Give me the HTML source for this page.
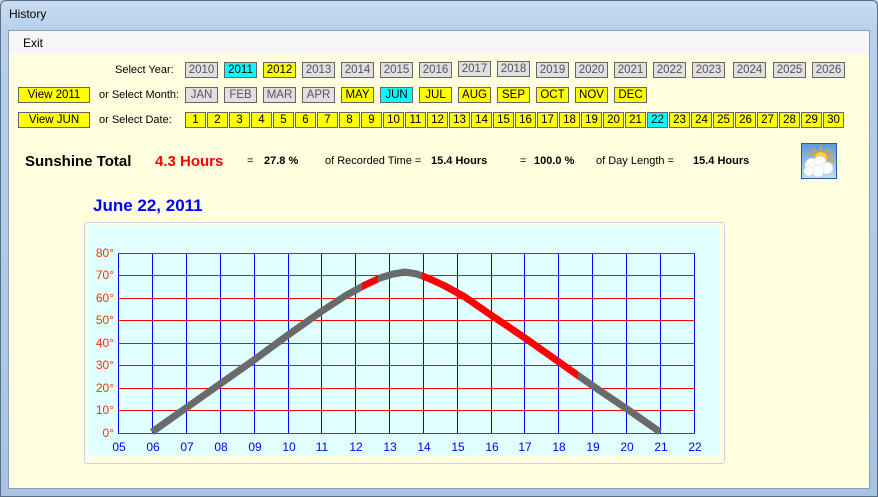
<!DOCTYPE html>
<html><head><meta charset="utf-8"><style>
*{margin:0;padding:0;box-sizing:border-box}
body{width:878px;height:497px;overflow:hidden;position:relative;font-family:"Liberation Sans",sans-serif;background:#b9d1ea}
.frame{position:absolute;left:0;top:0;width:878px;height:497px;background:linear-gradient(180deg,#c9ddf2 0,#b8d0ea 30px,#a9c4e0 100%);border:1px solid #5a6f87;border-radius:6px 6px 0 0}
.title{position:absolute;left:9px;top:7px;font-size:12px;color:#000}
.menu{position:absolute;left:8px;top:30px;width:862px;height:24px;background:#f6f6f6;border:1px solid #8aa0b8;border-bottom:none}
.menu span{position:absolute;left:14px;top:5px;font-size:12px}
.content{position:absolute;left:8px;top:54px;width:862px;height:435px;background:#ffffe0;border-left:1px solid #8aa0b8;border-right:1px solid #8aa0b8;border-bottom:1px solid #8aa0b8}
.b{position:absolute;height:16px;border:1px solid #666;font-size:11.5px;text-align:center;line-height:14px;color:#333}
.g{background:#e0e0e0;color:#555}
.y{background:#ffff00;color:#000}
.c{background:#00ffff;color:#000}
.l{position:absolute;font-size:11px;color:#000}
.t{position:absolute;font-size:11px;top:155px}
.bd{font-weight:bold}
</style></head><body>
<div class="frame"></div>
<div class="title">History</div>
<div class="menu"><span>Exit</span></div>
<div class="content"></div>

<div class="l" style="left:115px;top:64px">Select Year:</div>
<div class="l" style="left:99px;top:89px">or Select Month:</div>
<div class="l" style="left:99px;top:114px">or Select Date:</div>
<div class="b y" style="left:18px;top:87px;width:72px">View 2011</div>
<div class="b y" style="left:18px;top:112px;width:72px">View JUN</div>

<div class="b g" style="left:185px;top:62px;width:33px">2010</div>
<div class="b c" style="left:224px;top:62px;width:33px">2011</div>
<div class="b y" style="left:263px;top:62px;width:33px">2012</div>
<div class="b g" style="left:302px;top:62px;width:33px">2013</div>
<div class="b g" style="left:341px;top:62px;width:33px">2014</div>
<div class="b g" style="left:380px;top:62px;width:33px">2015</div>
<div class="b g" style="left:419px;top:62px;width:33px">2016</div>
<div class="b g" style="left:458px;top:61px;width:33px">2017</div>
<div class="b g" style="left:497px;top:61px;width:33px">2018</div>
<div class="b g" style="left:536px;top:62px;width:33px">2019</div>
<div class="b g" style="left:575px;top:62px;width:33px">2020</div>
<div class="b g" style="left:614px;top:62px;width:33px">2021</div>
<div class="b g" style="left:653px;top:62px;width:33px">2022</div>
<div class="b g" style="left:692px;top:62px;width:33px">2023</div>
<div class="b g" style="left:733px;top:62px;width:33px">2024</div>
<div class="b g" style="left:773px;top:62px;width:33px">2025</div>
<div class="b g" style="left:812px;top:62px;width:33px">2026</div>

<div class="b g" style="left:185px;top:87px;width:33px">JAN</div>
<div class="b g" style="left:224px;top:87px;width:33px">FEB</div>
<div class="b g" style="left:263px;top:87px;width:33px">MAR</div>
<div class="b g" style="left:302px;top:87px;width:33px">APR</div>
<div class="b y" style="left:341px;top:87px;width:33px">MAY</div>
<div class="b c" style="left:380px;top:87px;width:33px">JUN</div>
<div class="b y" style="left:419px;top:87px;width:33px">JUL</div>
<div class="b y" style="left:458px;top:87px;width:33px">AUG</div>
<div class="b y" style="left:497px;top:87px;width:33px">SEP</div>
<div class="b y" style="left:536px;top:87px;width:33px">OCT</div>
<div class="b y" style="left:575px;top:87px;width:33px">NOV</div>
<div class="b y" style="left:614px;top:87px;width:33px">DEC</div>

<div class="b y" style="left:185px;top:112px;width:21px">1</div>
<div class="b y" style="left:207px;top:112px;width:21px">2</div>
<div class="b y" style="left:229px;top:112px;width:21px">3</div>
<div class="b y" style="left:251px;top:112px;width:21px">4</div>
<div class="b y" style="left:273px;top:112px;width:21px">5</div>
<div class="b y" style="left:295px;top:112px;width:21px">6</div>
<div class="b y" style="left:317px;top:112px;width:21px">7</div>
<div class="b y" style="left:339px;top:112px;width:21px">8</div>
<div class="b y" style="left:361px;top:112px;width:21px">9</div>
<div class="b y" style="left:383px;top:112px;width:21px">10</div>
<div class="b y" style="left:405px;top:112px;width:21px">11</div>
<div class="b y" style="left:427px;top:112px;width:21px">12</div>
<div class="b y" style="left:449px;top:112px;width:21px">13</div>
<div class="b y" style="left:471px;top:112px;width:21px">14</div>
<div class="b y" style="left:493px;top:112px;width:21px">15</div>
<div class="b y" style="left:515px;top:112px;width:21px">16</div>
<div class="b y" style="left:537px;top:112px;width:21px">17</div>
<div class="b y" style="left:559px;top:112px;width:21px">18</div>
<div class="b y" style="left:581px;top:112px;width:21px">19</div>
<div class="b y" style="left:603px;top:112px;width:21px">20</div>
<div class="b y" style="left:625px;top:112px;width:21px">21</div>
<div class="b c" style="left:647px;top:112px;width:21px">22</div>
<div class="b y" style="left:669px;top:112px;width:21px">23</div>
<div class="b y" style="left:691px;top:112px;width:21px">24</div>
<div class="b y" style="left:713px;top:112px;width:21px">25</div>
<div class="b y" style="left:735px;top:112px;width:21px">26</div>
<div class="b y" style="left:757px;top:112px;width:21px">27</div>
<div class="b y" style="left:779px;top:112px;width:21px">28</div>
<div class="b y" style="left:801px;top:112px;width:21px">29</div>
<div class="b y" style="left:823px;top:112px;width:21px">30</div>

<div class="t bd" style="left:25px;top:153px;font-size:15px">Sunshine Total</div>
<div class="t bd" style="left:155px;top:153px;font-size:15px;color:#f00">4.3 Hours</div>
<div class="t" style="left:247px">=</div>
<div class="t bd" style="left:264px">27.8 %</div>
<div class="t" style="left:325px">of Recorded Time =</div>
<div class="t bd" style="left:431px">15.4 Hours</div>
<div class="t" style="left:520px">=</div>
<div class="t bd" style="left:534px">100.0 %</div>
<div class="t" style="left:596px">of Day Length =</div>
<div class="t bd" style="left:693px">15.4 Hours</div>

<svg style="position:absolute;left:801px;top:143px" width="36" height="36" viewBox="0 0 36 36">
<defs><linearGradient id="sk" x1="0" y1="0" x2="0" y2="1"><stop offset="0" stop-color="#5a9ad8"/><stop offset="1" stop-color="#bfe0f8"/></linearGradient></defs>
<rect x="0.5" y="0.5" width="35" height="35" fill="url(#sk)" stroke="#2a5a90"/>
<g stroke="#f0a020" stroke-width="2"><line x1="20" y1="14" x2="20" y2="3"/><line x1="20" y1="14" x2="28" y2="5"/><line x1="20" y1="14" x2="32" y2="11"/><line x1="20" y1="14" x2="12" y2="5"/><line x1="20" y1="14" x2="6" y2="10"/><line x1="20" y1="14" x2="33" y2="18"/></g>
<circle cx="20" cy="15" r="6" fill="#ffd040"/>
<g fill="#fff" stroke="#ccc" stroke-width=".5"><circle cx="11" cy="22" r="7"/><circle cx="19" cy="19" r="6"/><circle cx="26" cy="25" r="6"/><circle cx="17" cy="28" r="6"/><circle cx="8" cy="28" r="5"/></g>
</svg>

<div style="position:absolute;left:93px;top:196px;font-size:17px;font-weight:bold;color:#0000ff">June 22, 2011</div>

<div style="position:absolute;left:84px;top:222px;width:641px;height:242px;border:1px solid #c8d4e0;border-radius:3px;background:#ffffe0"></div>
<div style="position:absolute;left:88px;top:225px;width:632px;height:231px;background:#e0ffff"></div>

<svg style="position:absolute;left:0;top:0" width="878" height="497">
<g stroke="#0000ff" stroke-width="1">
<line x1="118.5" y1="253" x2="118.5" y2="433"/><line x1="152.5" y1="253" x2="152.5" y2="433"/><line x1="186.5" y1="253" x2="186.5" y2="433"/><line x1="220.5" y1="253" x2="220.5" y2="433"/><line x1="254.5" y1="253" x2="254.5" y2="433"/><line x1="288.5" y1="253" x2="288.5" y2="433"/><line x1="321.5" y1="253" x2="321.5" y2="433"/><line x1="355.5" y1="253" x2="355.5" y2="433"/><line x1="389.5" y1="253" x2="389.5" y2="433"/><line x1="423.5" y1="253" x2="423.5" y2="433"/><line x1="457.5" y1="253" x2="457.5" y2="433"/><line x1="491.5" y1="253" x2="491.5" y2="433"/><line x1="524.5" y1="253" x2="524.5" y2="433"/><line x1="558.5" y1="253" x2="558.5" y2="433"/><line x1="592.5" y1="253" x2="592.5" y2="433"/><line x1="626.5" y1="253" x2="626.5" y2="433"/><line x1="660.5" y1="253" x2="660.5" y2="433"/><line x1="694.5" y1="253" x2="694.5" y2="433"/>
</g>
<g stroke="#ff0000" stroke-width="1">
<line x1="118" y1="253.5" x2="695" y2="253.5"/><line x1="118" y1="275.5" x2="695" y2="275.5"/><line x1="118" y1="298.5" x2="695" y2="298.5"/><line x1="118" y1="320.5" x2="695" y2="320.5"/><line x1="118" y1="343.5" x2="695" y2="343.5"/><line x1="118" y1="365.5" x2="695" y2="365.5"/><line x1="118" y1="388.5" x2="695" y2="388.5"/><line x1="118" y1="410.5" x2="695" y2="410.5"/><line x1="118" y1="433.5" x2="695" y2="433.5"/>
</g>
<clipPath id="c1"><rect x="0" y="0" width="362" height="497"/><rect x="378" y="0" width="44" height="497"/><rect x="578" y="0" width="300" height="497"/></clipPath>
<clipPath id="c2"><rect x="362" y="0" width="16" height="497"/><rect x="422" y="0" width="156" height="497"/></clipPath>
<polyline points="152,432 186,408 220,384 254,360 288,335 322,311 345,296 365,285 380,278 393,274 405,272 417,274 430,279 445,286 465,297 488,313 525,338 559,362 593,386 627,409 660,432" fill="none" stroke="#6a6a6a" stroke-width="7" stroke-linejoin="round" clip-path="url(#c1)"/>
<polyline points="152,432 186,408 220,384 254,360 288,335 322,311 345,296 365,285 380,278 393,274 405,272 417,274 430,279 445,286 465,297 488,313 525,338 559,362 593,386 627,409 660,432" fill="none" stroke="#ff0000" stroke-width="7" stroke-linejoin="round" clip-path="url(#c2)"/>
<g font-family="Liberation Sans,sans-serif" font-size="12" fill="#ff3300" text-anchor="end">
<text x="114" y="257">80°</text><text x="114" y="279">70°</text><text x="114" y="302">60°</text><text x="114" y="324">50°</text><text x="114" y="347">40°</text><text x="114" y="369">30°</text><text x="114" y="392">20°</text><text x="114" y="414">10°</text><text x="114" y="437">0°</text>
</g>
<g font-family="Liberation Sans,sans-serif" font-size="12" fill="#0000ff" text-anchor="middle">
<text x="119" y="451">05</text><text x="153" y="451">06</text><text x="187" y="451">07</text><text x="221" y="451">08</text><text x="255" y="451">09</text><text x="289" y="451">10</text><text x="322" y="451">11</text><text x="356" y="451">12</text><text x="390" y="451">13</text><text x="424" y="451">14</text><text x="458" y="451">15</text><text x="492" y="451">16</text><text x="525" y="451">17</text><text x="559" y="451">18</text><text x="593" y="451">19</text><text x="627" y="451">20</text><text x="661" y="451">21</text><text x="695" y="451">22</text>
</g>
</svg>
</body></html>
